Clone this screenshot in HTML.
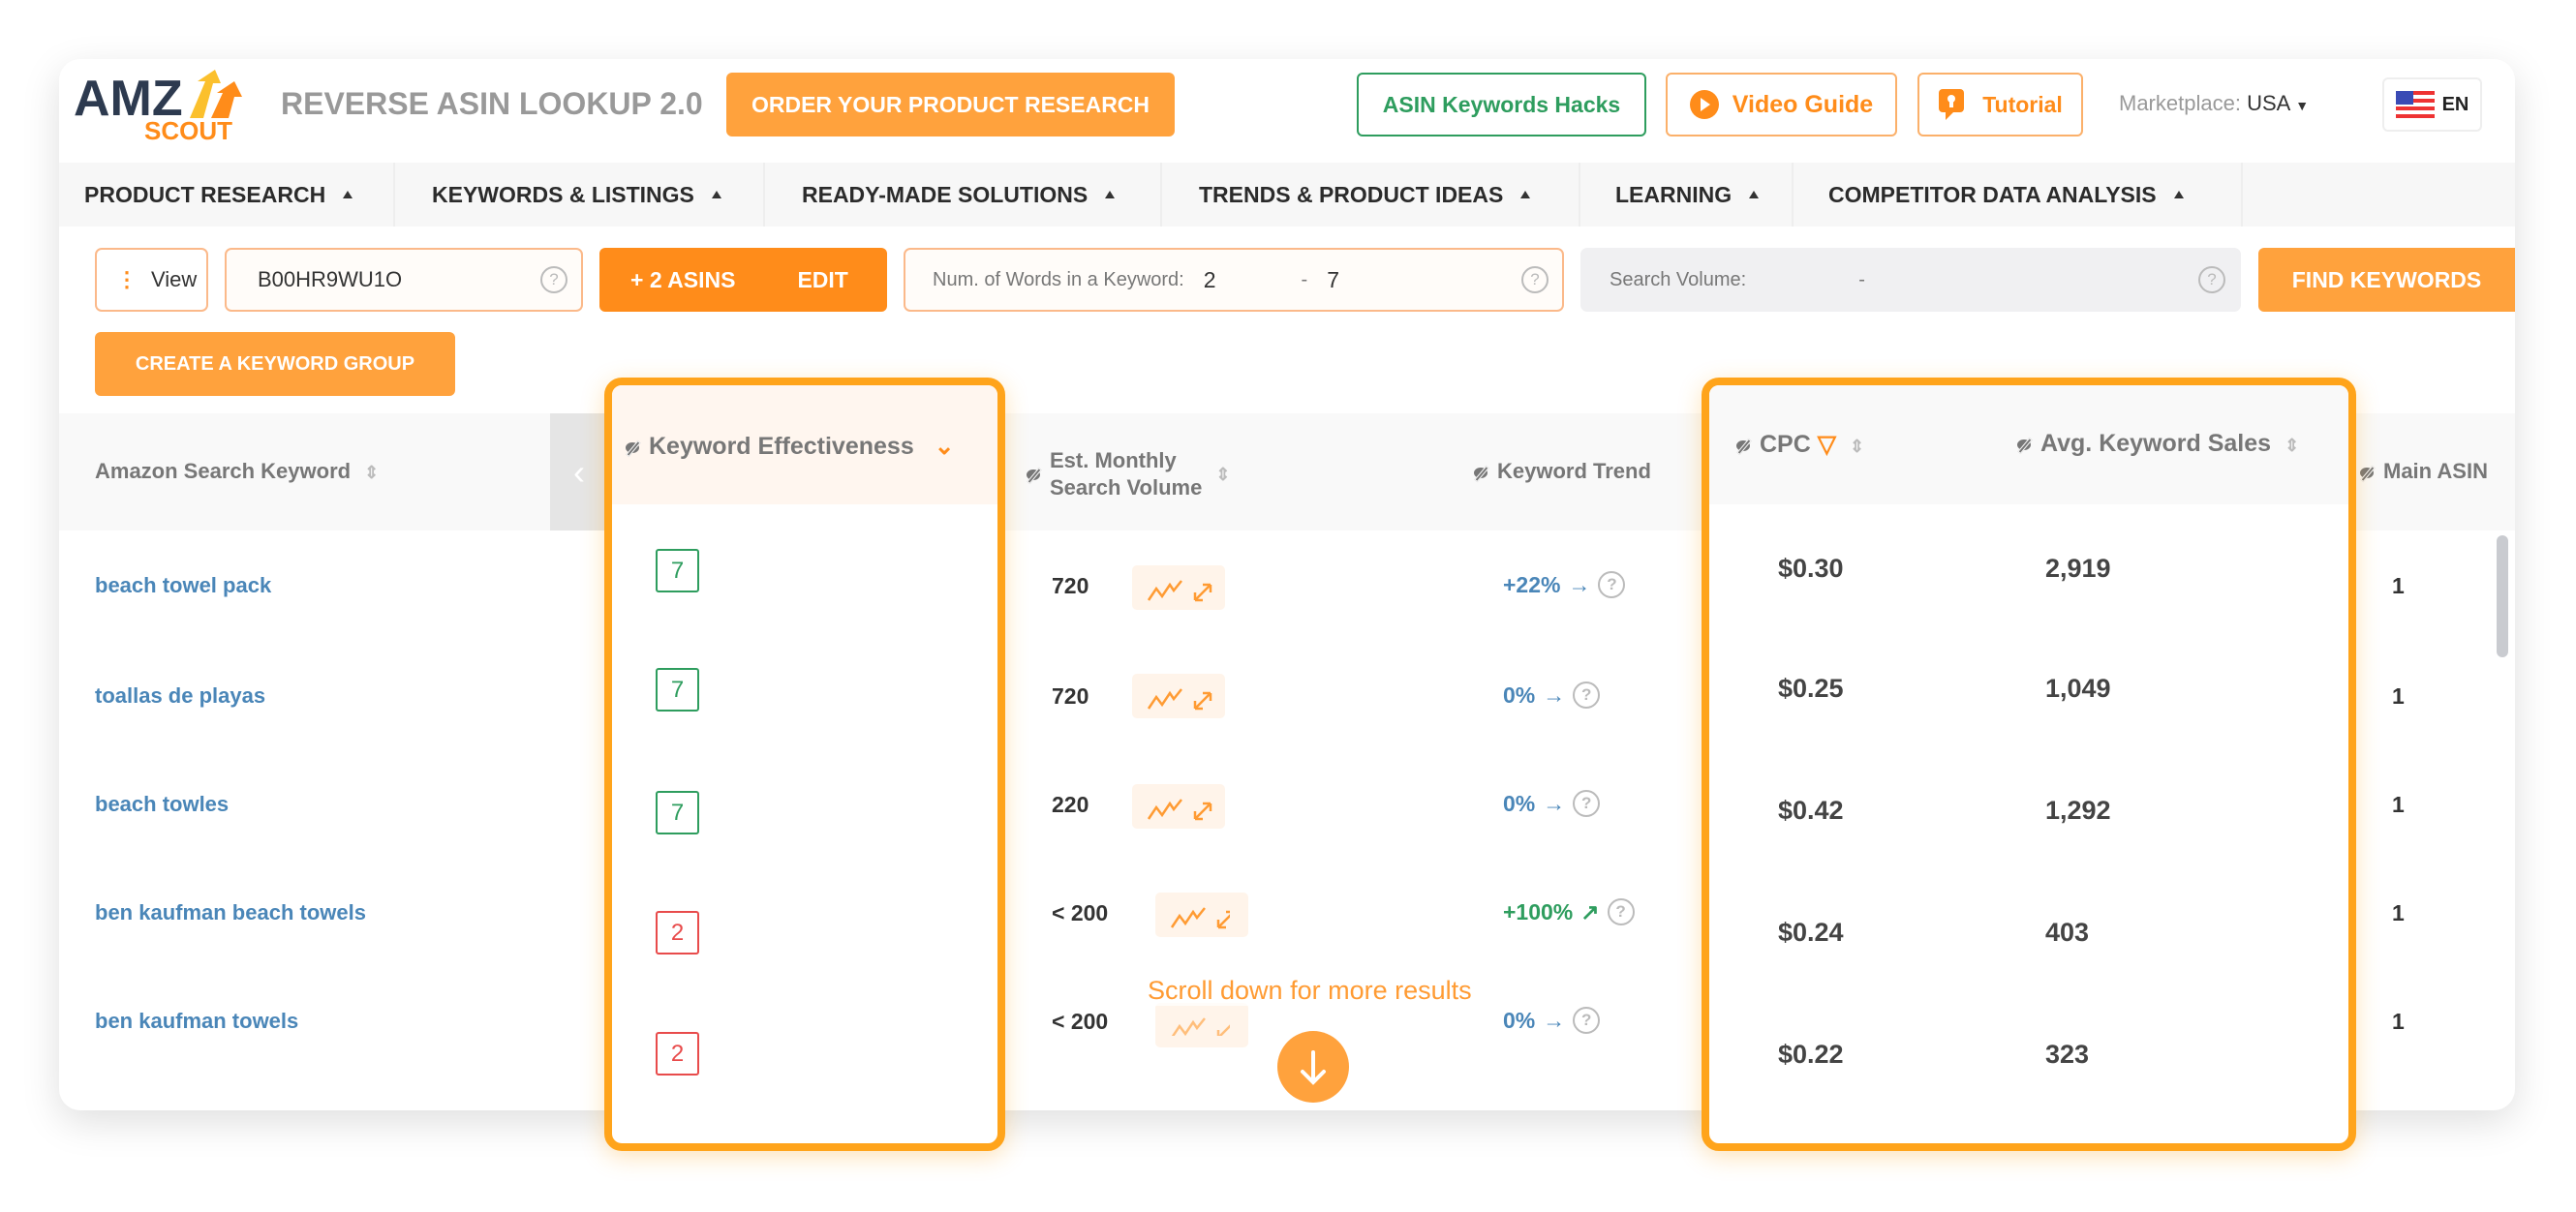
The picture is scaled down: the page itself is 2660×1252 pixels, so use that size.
<!DOCTYPE html>
<html><head><meta charset="utf-8"><style>
*{box-sizing:border-box;margin:0;padding:0}
body{width:2660px;height:1252px;background:#fff;font-family:"Liberation Sans",sans-serif;position:relative;overflow:hidden}
.a{position:absolute}
.card{left:61px;top:61px;width:2536px;height:1086px;background:#fff;border-radius:22px;box-shadow:0 12px 40px rgba(0,0,0,.13)}
.btn{display:flex;align-items:center;justify-content:center;border-radius:6px;font-weight:bold}
.nav{left:61px;top:168px;width:2536px;height:66px;background:#f7f7f7}
.ni{position:absolute;top:0;height:66px;display:flex;align-items:center;font-weight:bold;font-size:23px;color:#2b2b2b;border-right:2px solid #eee}
.ni:after{content:"";margin-left:18px;border-left:5px solid transparent;border-right:5px solid transparent;border-bottom:8px solid #333}
.inp{border:2px solid #fbb98a;border-radius:7px;background:#fffcf9;display:flex;align-items:center;font-size:22px;color:#333}
.q{width:28px;height:28px;border:2px solid #bbb;border-radius:50%;color:#bbb;font-size:17px;display:flex;align-items:center;justify-content:center}
.hdr{font-size:22px;color:#777;font-weight:bold}
.eye{display:inline-block;width:14px;height:11px;border-radius:50%;background:#777;margin-right:10px;position:relative;vertical-align:middle}
.eye:after{content:"";position:absolute;left:6px;top:-3px;width:2px;height:17px;background:#777;transform:rotate(40deg);border:1px solid #f9f9f9}
.kw{font-size:22px;font-weight:bold;color:#4a86b8}
.num{font-size:23px;font-weight:bold;color:#333}
.big{font-size:27px;font-weight:bold;color:#444}
.badge{width:45px;height:45px;border:2px solid;border-radius:3px;display:flex;align-items:center;justify-content:center;font-size:24px}
.g{border-color:#2e9d5e;color:#2e9d5e}.r{border-color:#e84b4b;color:#e84b4b}
.chart{width:96px;height:46px;background:#fff4ea;border-radius:5px}
.hl{border:8px solid #ffa41b;border-radius:18px;box-shadow:0 6px 24px rgba(255,164,27,.3)}
.sort{color:#bbb;font-size:18px;margin-left:14px}
</style></head><body>
<div class="a card"></div>
<!-- logo -->
<div class="a" style="left:76px;top:72px;font-size:52px;font-weight:bold;color:#2d3a4f;letter-spacing:0px">AMZ</div>
<svg class="a" style="left:192px;top:70px" width="64" height="55"><path d="M4 52 L20 14 L12 14 L30 2 L36 16 L28 16 L18 52Z" fill="#fbc02d"/><path d="M26 52 L38 26 L32 26 L50 14 L58 30 L50 30 L44 52Z" fill="#ff8c1a"/></svg>
<div class="a" style="left:149px;top:120px;font-size:26px;font-weight:bold;color:#ff8c1a">SCOUT</div>
<div class="a" style="left:290px;top:89px;font-size:32px;font-weight:bold;color:#999">REVERSE ASIN LOOKUP 2.0</div>
<div class="a btn" style="left:750px;top:75px;width:463px;height:66px;background:#ffa23d;color:#fff;font-size:23px">ORDER YOUR PRODUCT RESEARCH</div>
<div class="a btn" style="left:1401px;top:75px;width:299px;height:66px;border:2px solid #2e9d5e;color:#2e9d5e;font-size:23px">ASIN Keywords Hacks</div>
<div class="a btn" style="left:1720px;top:75px;width:239px;height:66px;border:2px solid #fbb06a;color:#ff8c1a;font-size:25px"><span style="width:30px;height:30px;border-radius:50%;background:#ff8c1a;display:inline-block;margin-right:14px;position:relative"><span style="position:absolute;left:11px;top:8px;border-left:10px solid #fff;border-top:7px solid transparent;border-bottom:7px solid transparent"></span></span>Video Guide</div>
<div class="a btn" style="left:1980px;top:75px;width:171px;height:66px;border:2px solid #fbb06a;color:#ff8c1a;font-size:23px"><svg width="28" height="36" style="margin-right:18px"><rect x="1" y="2" width="26" height="24" rx="4" fill="#ff8c1a"/><path d="M8 26 L8 34 L16 26Z" fill="#ff8c1a"/><circle cx="14" cy="12" r="4" fill="#fff"/><rect x="12" y="15" width="4" height="6" fill="#fff"/></svg>Tutorial</div>
<div class="a" style="left:2188px;top:94px;font-size:22px;color:#999">Marketplace: <span style="color:#333">USA</span> <span style="font-size:14px;color:#333">&#9660;</span></div>
<div class="a btn" style="left:2460px;top:80px;width:103px;height:56px;border:2px solid #eee;font-size:20px;color:#222"><svg width="40" height="28" style="margin-right:8px"><rect width="40" height="28" fill="#e33"/><rect y="4" width="40" height="4" fill="#fff"/><rect y="12" width="40" height="4" fill="#fff"/><rect y="20" width="40" height="4" fill="#fff"/><rect width="18" height="14" fill="#3a4bb5"/></svg>EN</div>
<!-- nav -->
<div class="a nav">
<div class="ni" style="left:0;width:347px;padding-left:26px">PRODUCT RESEARCH</div>
<div class="ni" style="left:347px;width:382px;padding-left:38px">KEYWORDS &amp; LISTINGS</div>
<div class="ni" style="left:729px;width:410px;padding-left:38px">READY-MADE SOLUTIONS</div>
<div class="ni" style="left:1139px;width:432px;padding-left:38px">TRENDS &amp; PRODUCT IDEAS</div>
<div class="ni" style="left:1571px;width:220px;padding-left:36px">LEARNING</div>
<div class="ni" style="left:1791px;width:464px;padding-left:36px">COMPETITOR DATA ANALYSIS</div>
</div>
<!-- controls -->
<div class="a inp" style="left:98px;top:256px;width:117px;height:66px;padding-left:20px;background:#fff"><span style="color:#ff8c1a;font-size:22px;margin-right:14px;font-weight:bold">&#8942;</span>View</div>
<div class="a inp" style="left:232px;top:256px;width:370px;height:66px;padding-left:32px;justify-content:space-between;padding-right:14px">B00HR9WU1O<span class="q">?</span></div>
<div class="a btn" style="left:619px;top:256px;width:297px;height:66px;background:#ff8c1a;color:#fff;font-size:23px;justify-content:flex-start;padding-left:32px">+ 2 ASINS<span style="margin-left:64px">EDIT</span></div>
<div class="a inp" style="left:933px;top:256px;width:682px;height:66px;padding-left:28px;padding-right:14px;font-size:20px"><span style="color:#777">Num. of Words in a Keyword:</span><span style="margin-left:20px;font-size:23px">2</span><span style="margin-left:88px;color:#777">-</span><span style="margin-left:20px;font-size:23px">7</span><span class="q" style="margin-left:auto">?</span></div>
<div class="a inp" style="left:1632px;top:256px;width:682px;height:66px;padding-left:28px;padding-right:14px;background:#f0f0f2;border-color:#f0f0f2;font-size:20px;color:#777">Search Volume:<span style="margin-left:116px">-</span><span class="q" style="margin-left:auto">?</span></div>
<div class="a btn" style="left:2332px;top:256px;width:265px;height:66px;background:#ffa23d;color:#fff;font-size:23px;border-radius:6px 0 0 6px">FIND KEYWORDS</div>
<div class="a btn" style="left:98px;top:343px;width:372px;height:66px;background:#ffa23d;color:#fff;font-size:20px">CREATE A KEYWORD GROUP</div>
<!-- table header -->
<div class="a" style="left:61px;top:427px;width:2536px;height:121px;background:#f9f9f9"></div>
<div class="a" style="left:568px;top:427px;width:60px;height:121px;background:#e5e5e5;color:#fff;font-size:36px;padding:40px 0 0 24px">&#8249;</div>
<div class="a hdr" style="left:98px;top:474px">Amazon Search Keyword<span class="sort">&#8661;</span></div>
<div class="a hdr" style="left:1060px;top:462px;line-height:28px"><span class="eye"></span><span style="display:inline-block;vertical-align:middle">Est. Monthly<br>Search Volume</span><span class="sort">&#8661;</span></div>
<div class="a hdr" style="left:1522px;top:474px"><span class="eye"></span>Keyword Trend</div>
<div class="a hdr" style="left:2437px;top:474px"><span class="eye"></span>Main ASIN</div>
<div class="a" style="left:2578px;top:553px;width:12px;height:126px;background:#c9cbd0;border-radius:6px"></div>
<!-- highlight 1 -->
<div class="a hl" style="left:624px;top:390px;width:414px;height:799px;background:#fff;overflow:hidden">
<div style="height:123px;background:#fff6ef;padding:48px 0 0 14px;font-size:25px" class="hdr"><span class="eye" style="margin-right:10px"></span>Keyword Effectiveness <span style="color:#ff8c1a;margin-left:14px">&#8964;</span></div>
</div>
<!-- highlight 2 -->
<div class="a hl" style="left:1757px;top:390px;width:676px;height:799px;background:#fff;overflow:hidden">
<div style="height:123px;background:#f9f9f9;padding:46px 0 0 28px;position:relative;font-size:25px" class="hdr"><span class="eye"></span>CPC <span style="color:#ff8c1a">&#9661;</span><span class="sort">&#8661;</span><span style="position:absolute;left:318px;top:46px"><span class="eye"></span>Avg. Keyword Sales<span class="sort">&#8661;</span></span></div>
</div>
<!-- rows -->
<div class="a kw" style="left:98px;top:592px">beach towel pack</div>
<div class="a kw" style="left:98px;top:706px">toallas de playas</div>
<div class="a kw" style="left:98px;top:818px">beach towles</div>
<div class="a kw" style="left:98px;top:930px">ben kaufman beach towels</div>
<div class="a kw" style="left:98px;top:1042px">ben kaufman towels</div>

<div class="a badge g" style="left:677px;top:567px">7</div>
<div class="a badge g" style="left:677px;top:690px">7</div>
<div class="a badge g" style="left:677px;top:817px">7</div>
<div class="a badge r" style="left:677px;top:941px">2</div>
<div class="a badge r" style="left:677px;top:1066px">2</div>

<div class="a num" style="left:1086px;top:592px">720</div>
<div class="a num" style="left:1086px;top:706px">720</div>
<div class="a num" style="left:1086px;top:818px">220</div>
<div class="a num" style="left:1086px;top:930px">&lt; 200</div>
<div class="a num" style="left:1086px;top:1042px">&lt; 200</div>

<div class="a chart" style="left:1169px;top:584px"></div>
<div class="a chart" style="left:1169px;top:696px"></div>
<div class="a chart" style="left:1169px;top:810px"></div>
<div class="a chart" style="left:1193px;top:922px"></div>
<div class="a chart" style="left:1193px;top:1036px"></div>
<svg class="a" style="left:1180px;top:590px" width="90" height="480" fill="none" stroke="#ff9b33" stroke-width="2.5">
<g><path d="M6 30 L14 18 L20 26 L28 14 L32 20 L40 10"/><path d="M54 30 L70 14 M54 30 v-8 M54 30 h8 M70 14 v8 M70 14 h-8"/></g>
<g transform="translate(0,112)"><path d="M6 30 L14 18 L20 26 L28 14 L32 20 L40 10"/><path d="M54 30 L70 14 M54 30 v-8 M54 30 h8 M70 14 v8 M70 14 h-8"/></g>
<g transform="translate(0,226)"><path d="M6 30 L14 18 L20 26 L28 14 L32 20 L40 10"/><path d="M54 30 L70 14 M54 30 v-8 M54 30 h8 M70 14 v8 M70 14 h-8"/></g>
<g transform="translate(24,338)"><path d="M6 30 L14 18 L20 26 L28 14 L32 20 L40 10"/><path d="M54 30 L70 14 M54 30 v-8 M54 30 h8 M70 14 v8 M70 14 h-8"/></g>
<g transform="translate(24,452)" opacity=".6"><path d="M6 30 L14 18 L20 26 L28 14 L32 20 L40 10"/><path d="M54 30 L70 14 M54 30 v-8 M54 30 h8"/></g>
</svg>

<div class="a num" style="left:1552px;top:590px;color:#4a86b8;display:flex;align-items:center">+22% <span style="margin:0 8px">&#8594;</span><span class="q">?</span></div>
<div class="a num" style="left:1552px;top:704px;color:#4a86b8;display:flex;align-items:center">0% <span style="margin:0 8px">&#8594;</span><span class="q">?</span></div>
<div class="a num" style="left:1552px;top:816px;color:#4a86b8;display:flex;align-items:center">0% <span style="margin:0 8px">&#8594;</span><span class="q">?</span></div>
<div class="a num" style="left:1552px;top:928px;color:#2e9d5e;display:flex;align-items:center">+100% <span style="margin:0 8px">&#8599;</span><span class="q">?</span></div>
<div class="a num" style="left:1552px;top:1040px;color:#4a86b8;display:flex;align-items:center">0% <span style="margin:0 8px">&#8594;</span><span class="q">?</span></div>

<div class="a big" style="left:1836px;top:572px">$0.30</div>
<div class="a big" style="left:1836px;top:696px">$0.25</div>
<div class="a big" style="left:1836px;top:822px">$0.42</div>
<div class="a big" style="left:1836px;top:948px">$0.24</div>
<div class="a big" style="left:1836px;top:1074px">$0.22</div>
<div class="a big" style="left:2112px;top:572px">2,919</div>
<div class="a big" style="left:2112px;top:696px">1,049</div>
<div class="a big" style="left:2112px;top:822px">1,292</div>
<div class="a big" style="left:2112px;top:948px">403</div>
<div class="a big" style="left:2112px;top:1074px">323</div>

<div class="a num" style="left:2470px;top:592px">1</div>
<div class="a num" style="left:2470px;top:706px">1</div>
<div class="a num" style="left:2470px;top:818px">1</div>
<div class="a num" style="left:2470px;top:930px">1</div>
<div class="a num" style="left:2470px;top:1042px">1</div>

<div class="a" style="left:1185px;top:1008px;font-size:27px;color:#ff9b33;background:rgba(255,255,255,.7)">Scroll down for more results</div>
<div class="a" style="left:1319px;top:1065px;width:74px;height:74px;border-radius:50%;background:#ffa23d"><svg width="74" height="74" fill="none" stroke="#fff" stroke-width="4" stroke-linecap="round"><path d="M37 22 V52 M26 42 L37 53 L48 42"/></svg></div>
</body></html>
